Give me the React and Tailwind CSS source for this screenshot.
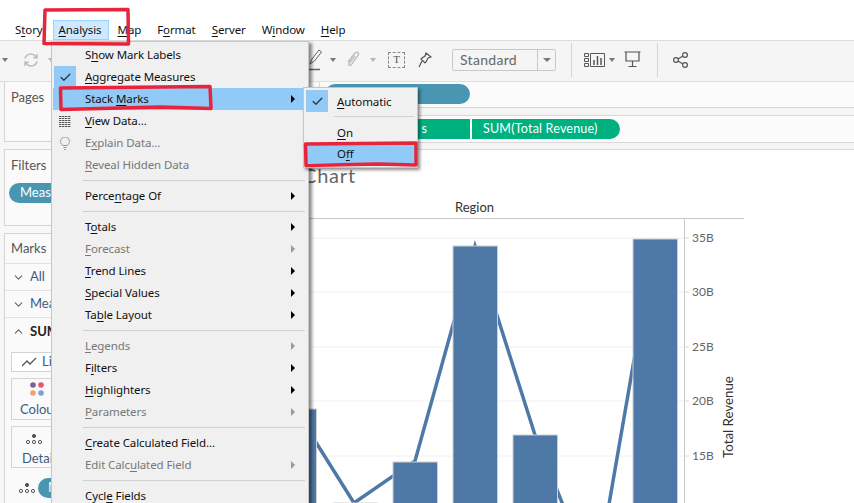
import { Check, ChevronDown, ChevronUp } from "lucide-react";

const uiFont = { fontFamily: '"Noto Sans", "Open Sans", sans-serif' };

const menuBar = ["S&tory", "&Analysis", "&Map", "F&ormat", "&Server", "W&indow", "&Help"];

const analysisMenu = [
  { label: "S&how Mark Labels" },
  { label: "&Aggregate Measures", checked: true },
  { label: "Stack &Marks", sub: true, active: true },
  { label: "&View Data...", icon: "grid" },
  { label: "E&xplain Data...", icon: "bulb", off: true },
  { label: "&Reveal Hidden Data", off: true },
  { sep: true },
  { label: "Perce&ntage Of", sub: true },
  { sep: true },
  { label: "T&otals", sub: true },
  { label: "&Forecast", sub: true, off: true },
  { label: "&Trend Lines", sub: true },
  { label: "&Special Values", sub: true },
  { label: "Ta&ble Layout", sub: true },
  { sep: true },
  { label: "&Legends", sub: true, off: true },
  { label: "F&ilters", sub: true },
  { label: "&Highlighters", sub: true },
  { label: "&Parameters", sub: true, off: true },
  { sep: true },
  { label: "&Create Calculated Field..." },
  { label: "Edit Calc&ulated Field", sub: true, off: true },
  { sep: true },
  { label: "Cycl&e Fields" },
];

// "&" marks the mnemonic letter, same as a windows menu label
function Mnemonic({ text }) {
  const i = text.indexOf("&");
  return (
    <span className="whitespace-nowrap">
      {text.slice(0, i)}
      <u className="underline-offset-2">{text[i + 1]}</u>
      {text.slice(i + 2)}
    </span>
  );
}

function GridIcon() {
  return (
    <svg width="13" height="11" viewBox="0 0 13 11" fill="#555">
      {[0, 2, 4, 6, 8, 10].map((y) =>
        [0, 3, 6, 9].map((x) => <rect key={`${x}-${y}`} x={x} y={y} width="2.4" height="1" />)
      )}
    </svg>
  );
}

function BulbIcon() {
  return (
    <svg width="10" height="13" viewBox="0 0 10 13" fill="none" stroke="#999">
      <path d="M3 8.500C1.500 7.500 .5 6 .5 4.500a4.500 4.500 0 0 1 9 0C9.500 6 8.500 7.500 7 8.500z" />
      <path d="M3.500 10.500h3M4 12.500h2" />
    </svg>
  );
}

function Caret({ className = "" }) {
  return <span className={`inline-block w-0 h-0 border-x-[3px] border-x-transparent border-t-[4px] border-t-[#777] ${className}`} />;
}

function AnalysisMenu() {
  return (
    <div className="absolute left-[51px] top-[41px] w-[258px] h-[480px] bg-[#f0f0f0] border border-[#c6c6c6] pt-[2px] pl-[1px] pr-[1px] shadow-[3px_2px_3px_rgba(0,0,0,0.45)] text-[11.5px] tracking-[-0.1px] z-10">
      {analysisMenu.map((item, index) =>
        item.sep ? (
          <div key={index} className="h-[9px] flex items-center pl-[30px] pr-[2px]">
            <div className="h-px w-full bg-[#d0d0d0]" />
          </div>
        ) : (
          <div
            key={index}
            className={`h-[22px] flex items-center ${item.active ? "bg-[#91c9f7]" : ""} ${item.off ? "text-[#777]" : "text-[#111]"}`}
          >
            <div className={`w-[22px] h-[22px] flex items-center justify-center ml-[1px] ${item.checked ? "bg-[#91c9f7]" : ""}`}>
              {item.checked && <Check size={13} strokeWidth={2.5} color="#2b3a4a" />}
              {item.icon === "grid" && <GridIcon />}
              {item.icon === "bulb" && <BulbIcon />}
            </div>
            <span className="ml-[9px] flex-1 leading-none">
              <Mnemonic text={item.label} />
            </span>
            {item.sub && (
              <span
                className={`mr-[12px] w-0 h-0 border-y-[4px] border-y-transparent border-l-[4px] ${item.off ? "border-l-[#999]" : "border-l-black"}`}
              />
            )}
          </div>
        )
      )}
    </div>
  );
}

function StackSubmenu() {
  return (
    <div className="absolute left-[303px] top-[87px] w-[115px] h-[81px] bg-[#f0f0f0] border border-[#c6c6c6] pt-[2px] pl-[1px] shadow-[2px_2px_3px_rgba(0,0,0,0.45)] text-[11.5px] tracking-[-0.1px] text-[#111] z-20">
      <div className="h-[22px] flex items-center">
        <div className="w-[22px] h-[22px] ml-px bg-[#91c9f7] flex items-center justify-center">
          <Check size={13} strokeWidth={2.5} color="#2b3a4a" />
        </div>
        <span className="ml-[9px] pt-[2px]"><Mnemonic text="&Automatic" /></span>
      </div>
      <div className="h-[9px] flex items-center pl-[29px] pr-[3px]">
        <div className="h-px w-full bg-[#d0d0d0]" />
      </div>
      <div className="h-[22px] flex items-center pl-[32px] pt-[2px]"><Mnemonic text="&On" /></div>
      <div className="h-[20px] flex items-center pl-[30px] pt-[1px] bg-[#91c9f7] mx-[2px]"><Mnemonic text="O&ff" /></div>
    </div>
  );
}

function RedMarks() {
  return (
    <svg className="absolute inset-0 z-30 pointer-events-none" width="854" height="503" fill="none" stroke="#e8243c" strokeWidth="3.5" strokeLinecap="round" strokeLinejoin="round">
      <path d="M45 10L128 9.500L128.500 44L44 43.500L45 10" />
      <path d="M62 88L210 86.500L211 108.500L160 107L61 109.500L60.500 88" />
      <path d="M306 144L416 143L416 165L378 164L306 165.500L305.500 144" />
    </svg>
  );
}

function Toolbar() {
  return (
    <div className="h-[42px] pb-[3px] bg-[#f5f5f5] border-y border-[#dedede] flex items-center relative text-[#666]">
      <Caret className="ml-[2px]" />
      <svg className="ml-[14px]" width="18" height="18" viewBox="0 0 24 24" fill="none" stroke="#bbb" strokeWidth="2">
        <path d="M4 10a8 8 0 0 1 14-3l2 2M20 14a8 8 0 0 1-14 3l-2-2M20 4v5h-5M4 20v-5h5" />
      </svg>
      <Caret className="ml-[8px] opacity-50" />
      <div className="ml-[253px] flex items-center">
        <svg width="16" height="22" viewBox="0 0 16 22" fill="none" stroke="#666">
          <path d="M3 15l2-5 7-9 2.500 2-7 9z" />
          <path d="M0 20.500h13" strokeWidth="1.500" />
        </svg>
        <Caret className="ml-[7px]" />
        <svg className="ml-[10px]" width="14" height="18" viewBox="0 0 14 18" fill="none" stroke="#bbb" strokeWidth="1.300">
          <path d="M2 11L9 2c2-2 4.500 0 3 2.500L5 14c-1 1.500-3 0-2-1.500L9 5" />
        </svg>
        <Caret className="ml-[10px] opacity-50" />
        <div className="ml-[12px] w-[17px] h-[16px] border border-dashed border-[#888] flex items-center justify-center text-[11px] leading-none text-[#555]" style={{ fontFamily: '"Liberation Serif", serif' }}>T</div>
        <svg className="ml-[13px]" width="14" height="16" viewBox="0 0 14 16" fill="none" stroke="#555" strokeWidth="1.200">
          <path d="M8 1l5 4-3 1-2 4-1 1-4-4 1-1 3-2zM4 9L1 15" />
        </svg>
        <div className="ml-[20px] w-[104px] h-[22px] border border-[#c8c8c8] rounded-[2px] flex items-center text-[14px]" style={{ fontFamily: "Lato, sans-serif" }}>
          <span className="flex-1 pl-[7px] text-[#666] tracking-[0.3px]">Standard</span>
          <span className="w-[18px] h-full border-l border-[#c8c8c8] flex items-center justify-center"><Caret className="border-x-[4px] border-t-[4px]" /></span>
        </div>
        <div className="ml-[15px] w-px h-[34px] bg-[#d6d6d6]" />
        <svg className="ml-[12px]" width="21" height="14" viewBox="0 0 21 14" fill="none" stroke="#555">
          <path d="M.500.500h4v3h-4zM.500 5.500h4v3h-4zM.500 10.500h4v3h-4zM6.500.500h14v13h-14z" />
          <path d="M10 12V7M13.500 12V3M17 12V5" strokeWidth="1.500" />
        </svg>
        <Caret className="ml-[4px]" />
        <svg className="ml-[9px]" width="17" height="17" viewBox="0 0 17 17" fill="none" stroke="#555" strokeWidth="1.200">
          <path d="M.500 1h16M2 1v9h13V1M8.500 10v5M4.500 15.500h8" />
        </svg>
        <div className="ml-[16px] w-px h-[34px] bg-[#d6d6d6]" />
        <svg className="ml-[15px]" width="15" height="16" viewBox="0 0 15 16" fill="none" stroke="#555" strokeWidth="1.200">
          <circle cx="3" cy="8" r="2.400" />
          <circle cx="12" cy="3" r="2.400" />
          <circle cx="12" cy="13" r="2.400" />
          <path d="M5 7l5-3M5 9l5 3" />
        </svg>
      </div>
    </div>
  );
}

function LeftPanel() {
  return (
    <div className="w-[140px] shrink-0 bg-[#f7f7f7] pl-[4px] text-[12px] text-[#555]" style={{ fontFamily: "Lato, sans-serif" }}>
      <div className="h-[61px] bg-[#fafafa] border border-[#d4d4d4] pl-[6px] pt-[6px] text-[13px]">Pages</div>
      <div className="mt-[7px] h-[77px] bg-[#fafafa] border border-[#d4d4d4] pl-[6px] pt-[6px] text-[13px]">
        Filters
        <div className="mt-[7px] -ml-[2px] h-[20px] w-[100px] rounded-full bg-[#4996b2] text-white pl-[11px] flex items-center">Meas</div>
      </div>
      <div className="mt-[7px] h-[300px] bg-[#fafafa] border border-[#d4d4d4] text-[13px]">
        <div className="h-[30px] pl-[6px] pt-[1px] flex items-center border-b border-[#e2e2e2]">Marks</div>
        <div className="h-[27px] pl-[7px] flex items-center gap-[5px] border-b border-[#e2e2e2] text-[#3d5a80]"><ChevronDown size={13} color="#666" /> All</div>
        <div className="h-[27px] pl-[7px] flex items-center gap-[5px] border-b border-[#e2e2e2] text-[#3d5a80]"><ChevronDown size={13} color="#666" /> Measure</div>
        <div className="h-[27px] pl-[7px] flex items-center gap-[5px] text-[#222] font-bold"><ChevronUp size={13} color="#666" /> SUM</div>
        <div className="ml-[6px] mt-[7px] h-[20px] border border-[#d4d4d4] bg-white flex items-center pl-[10px] gap-[5px] text-[#3d5a80]">
          <svg width="15" height="10" viewBox="0 0 15 10" fill="none" stroke="#555" strokeWidth="1.300"><path d="M0 9l5-5 3 3 6-6" /></svg>
          Line
        </div>
        <div className="ml-[6px] mt-[6px] h-[42px] w-[100px] border border-[#d4d4d4] pl-[8px] flex flex-col text-[#3d5a80]">
          <svg className="ml-[10px] mt-[3px]" width="16" height="16" viewBox="0 0 16 16">
            <circle cx="3" cy="3" r="2.800" fill="#7b6391" />
            <circle cx="11" cy="3" r="2.800" fill="#e8556a" />
            <circle cx="3" cy="11" r="2.800" fill="#f2a06f" />
            <circle cx="11" cy="11" r="2.800" fill="#7f9fd0" />
          </svg>
          <span className="mt-[5px] leading-none">Colour</span>
        </div>
        <div className="ml-[6px] mt-[6px] h-[42px] w-[100px] border border-[#d4d4d4] pl-[10px] flex flex-col text-[#3d5a80]">
          <DotsIcon className="ml-[4px] mt-[7px]" />
          <span className="mt-[8px] leading-none">Detail</span>
        </div>
        <div className="ml-[14px] mt-[10px] flex items-center gap-[3px]">
          <DotsIcon />
          <div className="h-[20px] w-[80px] rounded-full bg-[#4996b2] text-white pl-[10px] flex items-center">M</div>
        </div>
      </div>
    </div>
  );
}

function DotsIcon({ className = "" }) {
  return (
    <svg className={className} width="16" height="10" viewBox="0 0 16 10" fill="none" stroke="#555">
      <circle cx="8" cy="2" r="1.600" fill="#555" />
      <circle cx="2" cy="8" r="1.600" />
      <circle cx="8" cy="8" r="1.600" />
      <circle cx="14" cy="8" r="1.600" />
    </svg>
  );
}

const gridLines = [
  { y: 237, label: "35B" },
  { y: 291, label: "30B" },
  { y: 346, label: "25B" },
  { y: 400, label: "20B" },
  { y: 455, label: "15B" },
];

const bars = [
  { x: 272, y: 408 },
  { x: 333, y: 502 },
  { x: 393, y: 461 },
  { x: 453, y: 245 },
  { x: 513, y: 434 },
  { x: 633, y: 238 },
];

// svg coordinates are page coordinates, shifted by the panel width and the chart's top
function ChartArea() {
  const top = 190;
  const left = 140;
  return (
    <svg width="714" height="313" viewBox={`${left} ${top} 714 313`} className="block">
      <text x="455" y="211" fontSize="13" fill="#333" fontFamily="Lato, sans-serif">Region</text>
      <line x1="140" y1="217.500" x2="744" y2="217.500" stroke="#c8c8c8" />
      <line x1="684.500" y1="217" x2="684.500" y2="503" stroke="#c8c8c8" />
      {gridLines.map((g) => (
        <g key={g.label}>
          <line x1="140" y1={g.y} x2="684" y2={g.y} stroke="#f0f0f0" />
          <line x1="684" y1={g.y} x2="689" y2={g.y} stroke="#d8d8d8" />
          <text x="692" y={g.y + 4} fontSize="12" fill="#666" fontFamily="Lato, sans-serif">{g.label}</text>
        </g>
      ))}
      <polyline
        points="295,408 354,502 415,460 475,245 535,434 595,584 655,238"
        fill="none"
        stroke="#4e79a7"
        strokeWidth="3.5"
      />
      {bars.map((b) => (
        <rect key={b.x} x={b.x} y={b.y} width="44.500" height={510 - b.y} fill="#4e79a7" stroke="#cfcfcf" />
      ))}
      <text transform="translate(733 457) rotate(-90)" fontSize="13.300" fill="#333" fontFamily="Lato, sans-serif">Total Revenue</text>
    </svg>
  );
}

function App() {
  return (
    <div className="relative w-[854px] h-[503px] overflow-hidden bg-white" style={uiFont}>
      <div className="h-[40px] pl-[15px] flex items-end text-[11.5px] tracking-[-0.1px] text-[#111]">
        {menuBar.map((label) => (
          <div
            key={label}
            className={`h-[20px] flex items-center ${label === "&Analysis" ? "bg-[#cde8ff] border border-[#99d1ff] px-[5px] w-[56px] -ml-[6px] mr-[9px]" : "mr-[16px]"}`}
          >
            <Mnemonic text={label} />
          </div>
        ))}
      </div>
      <Toolbar />
      <div className="flex -mt-px">
        <LeftPanel />
        <div className="flex-1 min-w-0">
          <div className="h-[27px] bg-[#fbfbfb] border-b border-[#d8d8d8] pl-[179px] flex items-center" style={{ fontFamily: "Lato, sans-serif" }}>
            <div className="w-px h-[26px] bg-[#d8d8d8] mr-[5px]" />
            <div className="h-[20px] w-[145px] rounded-full bg-[#4996b2]" />
          </div>
          <div className="h-[7px] bg-[#f5f5f5]" />
          <div className="h-[28px] bg-[#fbfbfb] border-y border-[#d8d8d8] pl-[240px] flex items-center gap-[2px] text-[12.500px] text-white" style={{ fontFamily: "Lato, sans-serif" }}>
            <div className="h-[20px] w-[90px] rounded-l-[10px] bg-[#00b180] flex items-center justify-end pr-[43px]">s</div>
            <div className="h-[20px] w-[148px] rounded-r-[10px] bg-[#00b180] pl-[11px] flex items-center tracking-[0.2px]">SUM(Total Revenue)</div>
          </div>
          <div className="h-[7px] bg-[#f5f5f5] border-b border-[#d8d8d8]" />
          <div className="h-[41px] pl-[163px] pt-[12px] text-[20px] tracking-[0.8px] leading-[26px] text-[#666]" style={{ fontFamily: "Lato, sans-serif" }}>Chart</div>
          <ChartArea />
        </div>
      </div>
      <AnalysisMenu />
      <StackSubmenu />
      <RedMarks />
    </div>
  );
}

export default App;
